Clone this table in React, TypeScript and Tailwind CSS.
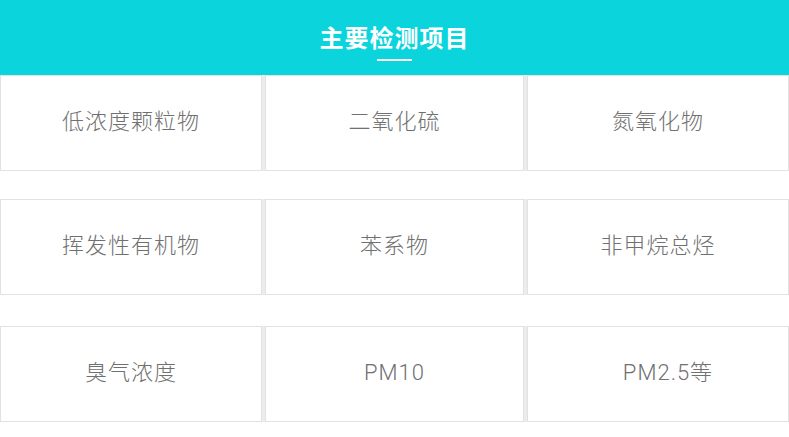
const rows = [
  ['低浓度颗粒物', '二氧化硫', '氮氧化物'],
  ['挥发性有机物', '苯系物', '非甲烷总烃'],
  ['臭气浓度', 'PM10', 'PM2.5等'],
];

export default function App() {
  return (
    <div className="w-[789px] h-[437px] bg-white font-['Roboto','Noto_Sans_CJK_SC',sans-serif]">
      <div className="h-[75px] bg-[#0bd4dc] flex flex-col items-center pt-[25px]">
        <h2 className="text-[24px] leading-[24px] font-bold text-white tracking-[1px] font-['Noto_Sans_CJK_SC',sans-serif]">
          主要检测项目
        </h2>
        <div className="mt-[10px] w-[35px] h-[2px] bg-white" />
      </div>
      <div className="flex flex-col">
        {rows.map((row, i) => (
          <div
            key={i}
            className={`grid grid-cols-[262px_259px_262px] gap-[3px] bg-[#ececec] ${i === 1 ? 'mt-[28px]' : i === 2 ? 'mt-[31px]' : ''}`}
          >
            {row.map((label, j) => (
              <div
                key={j}
                className={`h-[96px] bg-white border border-[#e2e2e2] flex items-center justify-center pb-[3px] text-[22px] font-light text-[#707070] tracking-[1px] ${
                  i === 2 && j === 2 ? 'pl-[20px]' : ''
                }`}
              >
                {label}
              </div>
            ))}
          </div>
        ))}
      </div>
    </div>
  );
}
